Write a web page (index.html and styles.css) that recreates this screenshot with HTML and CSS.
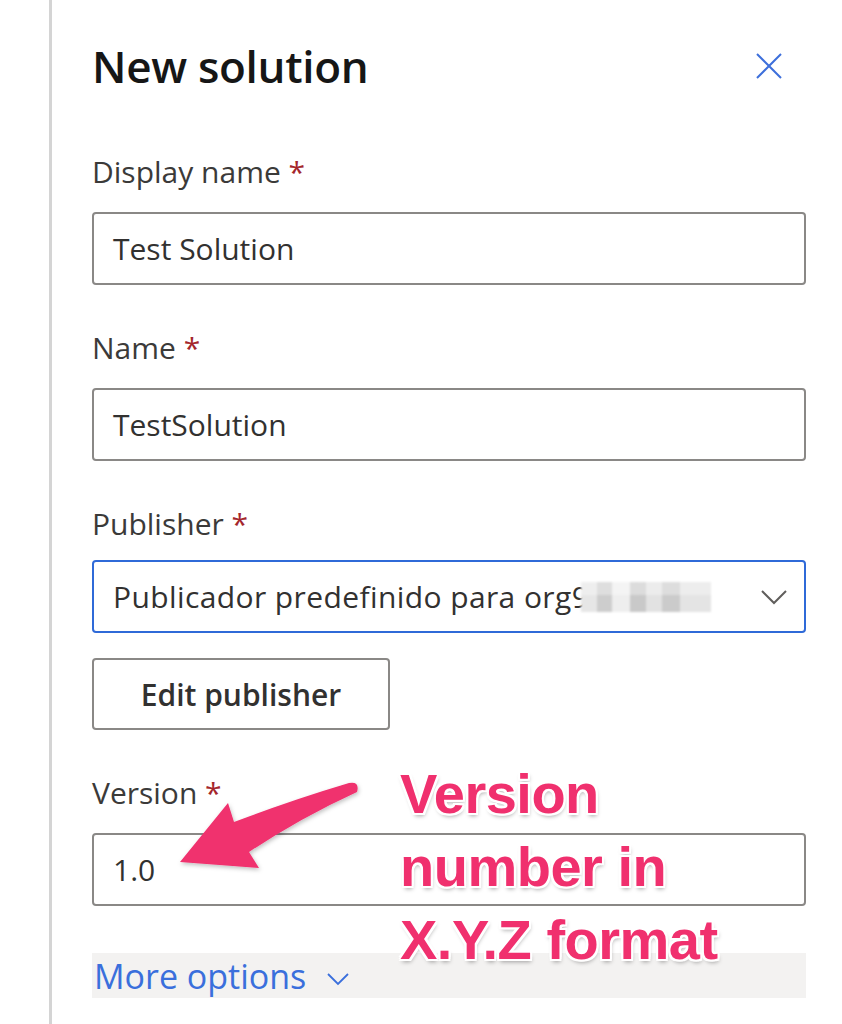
FILE: index.html
```html
<!DOCTYPE html>
<html>
<head>
<meta charset="utf-8">
<link rel="stylesheet" href="styles.css">
</head>
<body>
<div class="panel">
  <div class="header">
    <h1 class="title">New solution</h1>
    <button class="close" aria-label="Close">
      <svg width="28" height="28" viewBox="0 0 28 28"><path d="M2 2 L26 26 M26 2 L2 26" stroke="#3d6fdb" stroke-width="2" fill="none"/></svg>
    </button>
  </div>

  <div class="field">
    <div class="label">Display name <span class="req">*</span></div>
    <div class="input">Test Solution</div>
  </div>

  <div class="field">
    <div class="label">Name <span class="req">*</span></div>
    <div class="input">TestSolution</div>
  </div>

  <div class="field pub">
    <div class="label">Publisher <span class="req">*</span></div>
    <div class="input select">
      <span class="sel-text">Publicador predefinido para org9<span class="blur"></span></span>
      <svg class="chev" width="28" height="16" viewBox="0 0 28 16"><path d="M2 2 L14 14 L26 2" stroke="#605e5c" stroke-width="2" fill="none"/></svg>
    </div>
  </div>

  <button class="btn">Edit publisher</button>

  <div class="field">
    <div class="label">Version <span class="req">*</span></div>
    <div class="input">1.0</div>
  </div>

  <div class="more">
    <span>More options</span>
    <svg width="24" height="14" viewBox="0 0 24 14"><path d="M2 2 L12 12 L22 2" stroke="#3a6fdc" stroke-width="1.8" fill="none"/></svg>
  </div>
</div>

<svg class="arrow" width="200" height="100" viewBox="170 775 200 100">
  <defs>
    <filter id="sh" x="-20%" y="-20%" width="140%" height="140%">
      <feDropShadow dx="1" dy="2" stdDeviation="2" flood-color="#000" flood-opacity="0.25"/>
    </filter>
  </defs>
  <path d="M180 862 L228 803 L234 822 Q292 800 349 783 Q360 781 357 792 Q302 817 249 852 L259 868 Z" fill="#f0306e" filter="url(#sh)"/>
</svg>

<div class="note">Version<br>number in<br>X.Y.Z format</div>
</body>
</html>
```

FILE: styles.css
```css
* { box-sizing: border-box; }
html, body { margin: 0; padding: 0; background: #fff; }
body {
  font-family: "Open Sans", "Noto Sans", sans-serif;
  color: #323130;
  position: relative;
  width: 842px;
  height: 1024px;
  overflow: hidden;
}
.panel {
  margin-left: 49px;
  border-left: 3px solid #d4d4d4;
  height: 1024px;
  padding: 38px 36px 0 40px;
}
.header {
  display: flex;
  justify-content: space-between;
  align-items: center;
  height: 56px;
  margin-bottom: 57px;
}
.title {
  margin: 0;
  font-size: 44px;
  font-weight: 600;
  line-height: 56px;
  color: #161616;
  letter-spacing: -0.3px;
}
.close {
  border: 0;
  background: none;
  padding: 0;
  margin-right: 22px;
  width: 30px;
  height: 30px;
  display: flex;
  align-items: center;
  justify-content: center;
}
.field { margin-bottom: 42px; }
.label {
  font-size: 30px;
  line-height: 42px;
  margin-bottom: 19px;
  color: #3b3a39;
}
.pub { margin-bottom: 25px; }
.pub .label { margin-bottom: 15px; }
.req { color: #a4262c; }
.input {
  height: 73px;
  border: 2px solid #8a8886;
  border-radius: 4px;
  padding: 0 19px;
  font-size: 30px;
  display: flex;
  align-items: center;
  color: #323130;
}
.select {
  border-color: #2f6ad8;
  justify-content: space-between;
  padding-right: 16px;
}
.sel-text { display: flex; align-items: center; white-space: nowrap; letter-spacing: 0.4px; }
.blur {
  display: inline-block;
  width: 130px;
  height: 30px;
  margin-left: -8px;
  background:
    linear-gradient(180deg, rgba(255,255,255,0.35) 0 45%, rgba(0,0,0,0) 45% 100%),
    linear-gradient(90deg, #e6e6e6 0 12%, #cdcdcd 12% 24%, #eeeeee 24% 38%, #c9c9c9 38% 50%, #e2e2e2 50% 62%, #cbcbcb 62% 76%, #e4e4e4 76% 100%);
  filter: blur(1.2px);
}
.btn {
  display: block;
  width: 298px;
  height: 72px;
  border: 2px solid #8a8886;
  border-radius: 4px;
  background: #fff;
  font-family: inherit;
  font-size: 30px;
  font-weight: 600;
  color: #323130;
  margin-bottom: 42px;
  padding: 0;
}
.more {
  margin-top: 47px;
  height: 45px;
  background: #f3f2f1;
  display: flex;
  align-items: center;
  gap: 20px;
  color: #3a6fdc;
  font-size: 34px;
  padding-left: 2px;
}
.more svg { margin-top: 6px; }
.arrow {
  position: absolute;
  left: 170px;
  top: 775px;
}
.note {
  position: absolute;
  left: 400px;
  top: 757px;
  font-family: "Liberation Sans", Arial, sans-serif;
  font-weight: 700;
  font-size: 56px;
  line-height: 73px;
  letter-spacing: -0.5px;
  color: #f0306e;
  white-space: nowrap;
  text-shadow:
    2px 0 0 #fff, -2px 0 0 #fff, 0 2px 0 #fff, 0 -2px 0 #fff,
    2px 2px 0 #fff, -2px -2px 0 #fff, 2px -2px 0 #fff, -2px 2px 0 #fff,
    1px 3px 4px rgba(0,0,0,0.35);
}
```
